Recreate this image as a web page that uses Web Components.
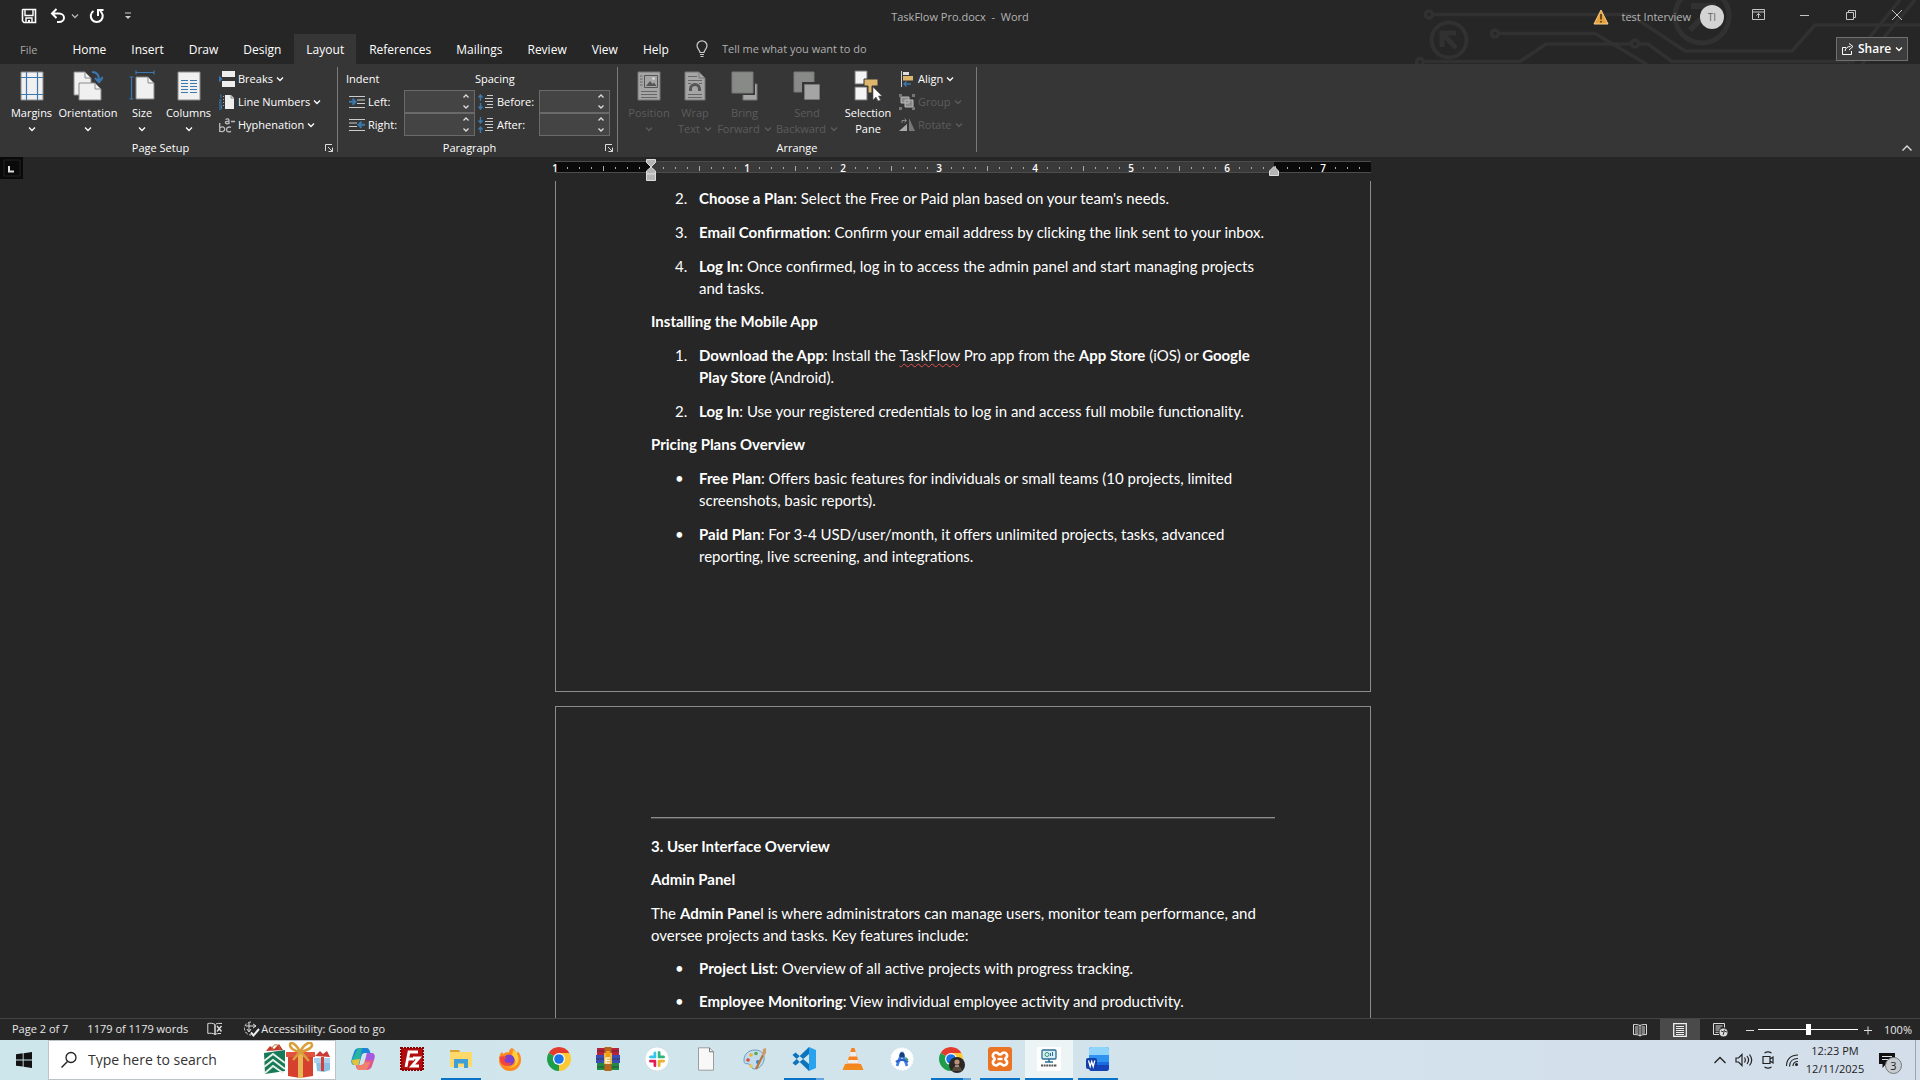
<!DOCTYPE html>
<html lang="en">
<head>
<meta charset="utf-8">
<title>TaskFlow Pro.docx - Word</title>
<style>
  html, body { margin: 0; height: 100%; }
  body { background: #262626; color: #fff; font: 11px/16px "Open Sans", "Noto Sans", sans-serif; overflow: hidden; }
  doc-page { font: 15px/22px Lato, "Open Sans", sans-serif; }
  doc-page p, doc-page h2, doc-page h3, doc-page li { margin: 12px 0 0; font-size: 15px; }
  doc-page h2, doc-page h3, doc-page li.tight { margin-top: 11px; font-weight: 700; }
  doc-page li.tight { font-weight: 400; }
  doc-page ol, doc-page ul { list-style: none; margin: 0; padding: 0 0 0 48px; }
  doc-page ol { counter-reset: step var(--from, 0); }
  doc-page li::before { display: inline-block; width: 24px; margin-left: -24px; }
  doc-page ol li::before { counter-increment: step; content: counter(step) "."; }
  doc-page ul li::before { content: "•"; }
  doc-page hr { border: 0; border-top: 1px solid #8c8c8c; border-bottom: 1px solid #4a4a4a; margin: 14px 0 16px; }
  doc-page .misspelt { text-decoration: underline wavy #e05252 1px; text-underline-offset: 2px; text-decoration-skip-ink: none; }
</style>
</head>
<body>
<word-app>
  <doc-page class="first">
    <ol style="--from: 1">
      <li><b>Choose a Plan</b>: Select the Free or Paid plan based on your team's needs.</li>
      <li><b>Email Confirmation</b>: Confirm your email address by clicking the link sent to your inbox.</li>
      <li><b>Log In:</b> Once confirmed, log in to access the admin panel and start managing projects and tasks.</li>
    </ol>
    <h3>Installing the Mobile App</h3>
    <ol>
      <li><b>Download the App</b>: Install the <span class="misspelt">TaskFlow</span> Pro app from the <b>App Store</b> (iOS) or <b>Google Play Store</b> (Android).</li>
      <li><b>Log In</b>: Use your registered credentials to log in and access full mobile functionality.</li>
    </ol>
    <h3>Pricing Plans Overview</h3>
    <ul>
      <li><b>Free Plan</b>: Offers basic features for individuals or small teams (10 projects, limited screenshots, basic reports).</li>
      <li><b>Paid Plan</b>: For 3-4 USD/user/month, it offers unlimited projects, tasks, advanced reporting, live screening, and integrations.</li>
    </ul>
  </doc-page>
  <doc-page>
    <hr>
    <h2>3. User Interface Overview</h2>
    <h3>Admin Panel</h3>
    <p>The <b>Admin Pane</b>l is where administrators can manage users, monitor team performance, and oversee projects and tasks. Key features include:</p>
    <ul>
      <li class="tight"><b>Project List</b>: Overview of all active projects with progress tracking.</li>
      <li class="tight"><b>Employee Monitoring</b>: View individual employee activity and productivity.</li>
    </ul>
  </doc-page>
</word-app>

<script>
const svg = (w, h, body) => `<svg width="${w}" height="${h}" viewBox="0 0 ${w} ${h}" fill="none">${body}</svg>`;
const sheet = (x, y, w, h, c = '#f0f0f0', s = '#8a8a8a') =>
  `<path d="M${x} ${y}h${w - 6}l6 6v${h - 6}h-${w}z" fill="${c}" stroke="${s}"/><path d="M${x + w - 6} ${y}v6h6" stroke="${s}"/>`;
const chromeRing = (x, y, r) => {
  const p = a => { const t = a * Math.PI / 180; return `${(x + r * Math.cos(t)).toFixed(2)} ${(y + r * Math.sin(t)).toFixed(2)}`; };
  return `<path d="M${x} ${y}L${p(210)}A${r} ${r} 0 0 1 ${p(330)}z" fill="#e33b2e"/>
    <path d="M${x} ${y}L${p(330)}A${r} ${r} 0 0 1 ${p(90)}z" fill="#fcc934"/>
    <path d="M${x} ${y}L${p(90)}A${r} ${r} 0 0 1 ${p(210)}z" fill="#1e9e4a"/>
    <path d="M${x} ${y - r / 2}H${x + r * .87}L${x + r * .4} ${y + r * .3}z" fill="#fcc934"/>
    <circle cx="${x}" cy="${y}" r="${r * .5}" fill="#fff"/><circle cx="${x}" cy="${y}" r="${r * .4}" fill="#1a73e8"/>`;
};
const ICONS = {
  save: svg(16, 16, '<path d="M2 1.5h12.5v13H3l-1.5-1.5V2z" stroke="#fff" stroke-width="1.6"/><path d="M4 2v5.5h8V2M5 14v-4h6v4" stroke="#fff" stroke-width="1.4"/><path d="M7 12h2v3H7z" fill="#fff"/>'),
  undo: svg(16, 16, '<path d="M6.5 1L2 5.5 6.5 10M2.5 5.500H9a5 4.300 0 0 1 0 8.600H7" stroke="#fff" stroke-width="2"/>'),
  redo: svg(16, 16, '<path d="M4.500 3A6 6 0 1 0 11 3" stroke="#fff" stroke-width="2"/><path d="M9 8V2h5.500" stroke="#fff" stroke-width="2"/>'),
  more: svg(8, 8, '<path d="M1 1h6" stroke="#ccc"/><path d="M1 4h6L4 7z" fill="#ccc"/>'),
  chev: svg(8, 8, '<path d="M1 2.500L4 5.500 7 2.500" stroke="currentColor" stroke-width="1.300"/>'),
  up: svg(8, 8, '<path d="M1.500 5.500L4 3l2.500 2.500" stroke="#ddd" stroke-width="1.300"/>'),
  down: svg(8, 8, '<path d="M1.500 2.500L4 5l2.500-2.500" stroke="#ddd" stroke-width="1.300"/>'),
  collapse: svg(12, 12, '<path d="M1.500 8.500L6 4l4.500 4.500" stroke="#ddd" stroke-width="1.400"/>'),
  bulb: svg(14, 18, '<path d="M5 12.500C5 10 2 9 2 5.800a5 5 0 0 1 10 0C12 9 9 10 9 12.500zM5 14.500h4M5.500 16.500h3" stroke="#ccc" stroke-width="1.200"/>'),
  warn: svg(16, 16, '<path d="M8 1l7 14H1z" fill="#e9a23b" stroke="#f4cf8d"/><path d="M8 5v5.500M8 12v1.500" stroke="#3a2a10" stroke-width="1.500"/>'),
  display: svg(14, 12, '<path d="M.5.500h12v10H.5zM.5 3h12M6.500 9V4.500M4.500 6.500l2-2 2 2" stroke="#c4c4c4"/>'),
  min: svg(12, 12, '<path d="M1 6.500h9" stroke="#c4c4c4"/>'),
  restore: svg(12, 12, '<path d="M1.500 3.500h7v7h-7zM3.500 3.500v-2h7v7h-2" stroke="#c4c4c4"/>'),
  close: svg(12, 12, '<path d="M1 1l10 10M11 1L1 11" stroke="#c4c4c4"/>'),
  share: svg(14, 14, '<path d="M5 5.500H1.500v7h9V9" stroke="#fff"/><path d="M4 9c.5-3 2.500-4.500 5.500-4.500M8 1.500l4 3-4 3.500" stroke="#fff"/>'),
  launch: svg(10, 10, '<path d="M1.500 8V1.500H8M4 4l4.500 4.500M8.500 4.500v4h-4" stroke="#ddd"/>'),
  margins: svg(24, 30, '<path d="M1 1h22v28H1z" fill="#f0f0f0" stroke="#8a8a8a"/><path d="M6.500 1v28M17.500 1v28M1 6.500h22M1 23.500h22" stroke="#3b78ad" stroke-width="1.200"/>'),
  orientation: svg(30, 32, sheet(1, 2, 17, 23) + sheet(6, 13, 22, 17) + '<path d="M19 2c5 0 7 3 7 8M22 8l4 4 4-5" stroke="#3b78ad" stroke-width="2.200"/>'),
  size: svg(26, 32, sheet(7, 7, 18, 22) + '<path d="M7 2.500h18M7 .5v4M25 .5v4M2.500 7v22M.5 7h4M.5 29h4" stroke="#3b78ad" stroke-width="1.200"/>'),
  columns: svg(24, 30, '<path d="M1 1h22v28H1z" fill="#f0f0f0" stroke="#8a8a8a"/><path d="M4 9.500h7M4 12.500h7M4 15.500h7M4 18.500h7M4 21.500h7M13 9.500h7M13 12.500h7M13 15.500h7M13 18.500h7M13 21.500h7" stroke="#3b78ad" stroke-width="1.200"/>'),
  breaks: svg(16, 16, '<path d="M3 0h13v6H3zM3 10h13v6H3z" fill="#eee"/><path d="M0 4.500L3.500 8 0 11.500z" fill="#3b78ad"/>'),
  lines: svg(16, 16, '<path d="M6 1h6l3 3v11H6z" fill="#eee"/><path d="M12 1v3h3" stroke="#888"/><path d="M1 1h1v3M0 6h2.500L0 9h3M0 11h2.500v4H0M0 13h2" stroke="#3b78ad"/><path d="M4.500 2v12" stroke="#aaa" stroke-dasharray="1 2"/>'),
  hyphen: svg(16, 16, '<path d="M.7 6v9M.7 11c3-2 5-.8 5 1.200S3 15.500.7 14M12 10.500c-2.500-1.200-4.500 0-4.500 2s2 3 4.500 1.800M6.500 2.500c2-1.200 3.500-.5 3.500 1V7M10 4.500C7 4 6 5 6.500 6s2.500 1 3.500 0M12 4.500h4" stroke="#bbb" stroke-width="1.300"/>'),
  indentL: svg(16, 14, '<path d="M0 1.500h16M8 5h8M8 8.500h8M0 12.500h16" stroke="#ccc"/><path d="M0 6.800h5.500M3.500 3.800l3 3-3 3" stroke="#3b78ad" stroke-width="2"/>'),
  indentR: svg(16, 14, '<path d="M0 1.500h16M0 5h8M0 8.500h8M0 12.500h16" stroke="#ccc"/><path d="M16 6.800h-5.500M12.500 3.800l-3 3 3 3" stroke="#3b78ad" stroke-width="2"/>'),
  before: svg(16, 16, '<path d="M2.500 7V1M.5 3.500l2-2.500 2 2.500M2.500 9v6M.5 12.500l2 2.500 2-2.500" stroke="#3b78ad" stroke-width="1.400"/><path d="M9 1.500h6M7 4.500h8M7 7.500h8M9 10.500h6M7 13.500h8" stroke="#ccc"/>'),
  after: svg(16, 16, '<path d="M2.500 0v6M.5 3.500l2 2.500 2-2.500M2.500 16v-6M.5 12.500l2-2.500 2 2.500" stroke="#3b78ad" stroke-width="1.400"/><path d="M9 1.500h6M7 4.500h8M7 7.500h8M9 10.500h6M7 13.500h8" stroke="#ccc"/>'),
  position: svg(24, 30, '<path d="M1 1h22v28H1z" fill="#a4a5a4" stroke="#777"/><path d="M7.500 4.500h13v12h-13z" fill="#a4a5a4" stroke="#555"/><path d="M9 15l4-5 2.500 3 1.500-1.500L19.500 15z" fill="#555"/><circle cx="16.500" cy="7.500" r="1.300" fill="#ddd"/><path d="M3 5h2.500M3 8h2.500M3 11h2.500M3 14h2.500M4 20.500h16M4 23.500h16M4 26.500h16" stroke="#666"/>'),
  wrap: svg(24, 30, sheet(2, 1, 20, 28, '#a4a5a4', '#777') + '<path d="M5 5.500h9M5 9.500h14M5 12.500h3M16 12.500h3M5 26.500h14M5 23.500h14" stroke="#666"/><path d="M7.500 20v-2a4.500 4.500 0 0 1 9 0v2" stroke="#555" stroke-width="3"/>'),
  forward: svg(28, 30, '<path d="M12 13h14v16H12z" fill="#a4a5a4" stroke="#777"/><path d="M0 0h24v24H0z" fill="#363636"/><path d="M1 1h21v21H1z" fill="#888a88" stroke="#777"/>'),
  backward: svg(28, 30, '<path d="M1 1h20v20H1z" fill="#888a88" stroke="#777"/><path d="M9 11h20v20H9z" fill="#363636"/><path d="M11.500 13.500h15v15h-15z" fill="#a4a5a4" stroke="#777"/>'),
  selection: svg(28, 32, '<path d="M1 1h12v13H1zM1 17h12v13H1z" fill="#f4f4f4" stroke="#777"/><path d="M10 9h14v7h-6v7h-4v-7h-4z" fill="#dcb66c" stroke="#363636"/><path d="M19 17v13l3-3 2 4 2.500-1-2-4h3.500z" fill="#fff" stroke="#555" stroke-width=".6"/>'),
  align: svg(16, 16, '<path d="M2.500 0v16" stroke="#ccc"/><path d="M4 1h6v3H4z" fill="#ddd"/><path d="M4 5h10v4.500H4z" fill="#dcb66c"/><path d="M5 13h7M7.500 10.500L5 13l2.500 2.500" stroke="#3b78ad" stroke-width="1.400"/>'),
  group: svg(16, 16, '<path d="M2 3h8v6H2zM6 6h8v7H6z" fill="#8a8a8a" stroke="#bbb"/><path d="M0 0h3v3H0zM13 0h3v3h-3zM0 13h3v3H0zM13 13h3v3h-3z" fill="#777"/>'),
  rotate: svg(16, 16, '<path d="M8 14H0l8-7z" fill="#aaa"/><path d="M10 1v13h6z" fill="#777"/><path d="M3 6V3.500h4M5.500 1.500l2 2-2 2" stroke="#888"/>'),
  proof: svg(16, 14, '<path d="M8 2.500C6 1 3 1 .8 1.500v10C3 11 6 11 8 12.500zM8 2.500v10M8 12.500c1.500-.8 3-1 6-1M9 2c1.500-.7 3-.7 6-.5" stroke="#ddd"/><path d="M10 4l4.500 5.500M14.500 4L10 9.500" stroke="#ddd" stroke-width="1.400"/>'),
  access: svg(18, 16, '<path d="M9 1a6.500 6.500 0 1 0 0 13" stroke="#ddd" stroke-dasharray="3 1.500"/><path d="M4 5h10M11 3l3 2-3 2M7 2v8M5 8l2 3 2-3" stroke="#ddd"/><path d="M9 11.500l2.500 3L17 8" stroke="#eee" stroke-width="2"/>'),
  read: svg(14, 14, '<path d="M7 2.500v11M7 2.500C5 1.500 3 1.500.5 1.500v10c2.500 0 4.500.2 6.500 1 2-.8 4-1 6.500-1v-10C11 1.500 9 1.500 7 2.500z" stroke="#ddd"/><path d="M2 4h3.500M2 6h3.500M2 8h3.500M8.500 4H12M8.500 6H12M8.500 8H12M8.500 10H12M2 10h3.500" stroke="#ddd"/>'),
  print: svg(14, 14, '<path d="M.7.700h12.600v12.600H.7z" stroke="#eee" stroke-width="1.300"/><path d="M3 3.500h8M3 5.500h8M3 7.500h8M3 9.500h8M3 11.500h8" stroke="#eee"/>'),
  web: svg(15, 14, '<path d="M.5 11.500V.5h11v4M2.500 3h7M2.500 5h5M2.500 7h4M.5 11.500H6M2.500 9.300h3" stroke="#ddd"/><circle cx="10.500" cy="9.500" r="4" fill="#ddd"/><path d="M8 8l3 1-1 3M12 6.500l-1 1.500 3 1" stroke="#333"/>'),
  minus: svg(10, 10, '<path d="M1 5.500h8" stroke="#ddd"/>'),
  plus: svg(10, 10, '<path d="M1 5.500h8M5 1.500v8" stroke="#ddd"/>'),
  start: svg(16, 16, '<path d="M0 2.300L6.700 1.300V7.500H0zM7.600 1.200L16 0v7.500H7.600zM0 8.400h6.700v6.200L0 13.700zM7.600 8.400H16V16l-8.400-1.200z" fill="#111"/>'),
  glass: svg(18, 18, '<circle cx="11" cy="6.500" r="5" stroke="#222" stroke-width="1.300"/><path d="M7.500 10.500L1.500 16.500" stroke="#222" stroke-width="1.400"/>'),
  gifts: svg(68, 36, `<path d="M3 9l4-5 4 3 5-5 4 6z" fill="#c9382e"/><path d="M1 11l21-3v21L2 32z" fill="#17795a"/><path d="M1 19l9-7 12 9M1 25l9-7 12 9M2 31l8-7 10 7" stroke="#e8f2e6" stroke-width="1.800"/><path d="M9 8c0-7 8-7 8 0" stroke="#a8712c"/>
    <path d="M25 14h25v20l-13 2-12-2z" fill="#d6402f"/><path d="M23 10h29v5H23z" fill="#e2533e"/><path d="M35 10h5v26h-5z" fill="#e6b657"/><path d="M37 10c-4-9-10-11-10-7 0 3 4 6 10 7 6-1 12-4 12-7-1-5-8-1-12 7zM37 10l-7 8M38 10l8 9" stroke="#d99f3a" stroke-width="2.600"/>
    <path d="M53 20h14v8l-6 2-7-1z" fill="#8dbfe3"/><path d="M51 16h16v5H51z" fill="#a9d2ee"/><path d="M52 14l5-5 3 3 4-3 3 6z" fill="#cb3a34"/><path d="M58 15h3v14h-3z" fill="#d2403a"/>`),
  copilot: svg(24, 24, '<path d="M9 1h6c3 0 3.500 2 4.500 5H14c-2 0-3 1-3.500 3L8 18H4c-4 0-4-3-3-7l2-6c.8-2.500 2.500-4 6-4z" fill="#1b86d8"/><path d="M3 9l4-8h4L8 18H4c-3 0-4-2-3-5z" fill="#27b5a0"/><path d="M1 13l8-1-1.500 6H4c-2 0-3-2-3-5z" fill="#e6c23c"/><path d="M15 23H9c-3 0-3.500-2-4.500-5H10c2 0 3-1 3.500-3L16 6h4c4 0 4 3 3 7l-2 6c-.8 2.500-2.500 4-6 4z" fill="#e0578f"/><path d="M16 6h4c4 0 4 3 3 7h-8.500z" fill="#a45be0"/><path d="M5 18h5c2 0 3-1 3.500-3h6l-4 8H9c-3 0-3.500-2-4-5z" fill="#f0806b"/>'),
  filezilla: svg(24, 24, '<path d="M1 1h22v22H1z" fill="#b30d0d" stroke="#8d0000" stroke-width="2" stroke-dasharray="2 1"/><path d="M6 20l3-15h9M8 12h6M13 11h6l-7 8h7" stroke="#fff" stroke-width="2.800"/>'),
  explorer: svg(24, 24, '<path d="M1 3h9l2 3H1z" fill="#d9a334"/><path d="M1 5h22v15H1z" fill="#ffd969"/><path d="M5 12h14v9h-4v-4.500H9V21H5z" fill="#3f9fd6"/>'),
  firefox: svg(24, 24, '<path d="M14 1c3 2 4 4 4.500 6 1-1 1-2 1-3 3 3 3.500 6 3.500 9a11 11 0 0 1-22 0c0-4 1-6 3-8l1.500 2C7 5 10 5 11 5.500 11 3 12 2 14 1z" fill="#ff8a1f"/><path d="M15 3c6 4 7 10 4 14-2 3-6 4-9 3 8 1 10-8 4-10z" fill="#ffd13a"/><circle cx="11" cy="13" r="5.500" fill="#7c3fd0"/><path d="M1.500 10c2-1 5-1 8 1-2 0-3 1-3 2 0 3 4 4 7 2-2 5-9 5-11 0z" fill="#f4453c"/>'),
  chrome: svg(24, 24, chromeRing(12, 12, 12)),
  winrar: svg(24, 24, '<path d="M1 1h22v7H1z" fill="#b5243d"/><path d="M0 8h24v8H0z" fill="#3c4fb0"/><path d="M1 16h22v7H1z" fill="#238a43"/><path d="M1 4h22M0 12h24M1 20h22" stroke="#222" stroke-opacity=".35" stroke-width="1.500"/><path d="M8.500 0h7v24h-7z" fill="#b5651d"/><path d="M8 6h8v11H8z" fill="#e8b94a"/><path d="M10 4h4v6h-4z" fill="#f39c12"/><path d="M10 11h4M10 13.500h4M10 11v5h4" stroke="#fff" stroke-width="1.200"/>'),
  slack: svg(24, 24, '<circle cx="12" cy="12" r="12" fill="#fff" stroke="#c9d3d8" stroke-width=".6"/><g stroke-width="3" stroke-linecap="round"><path d="M10 6v4" stroke="#36c5f0"/><path d="M5.500 10H10" stroke="#36c5f0"/><path d="M14 10V5.500M14 10h4.500" stroke="#2eb67d"/><path d="M14 14h4.500M14 14v4.500" stroke="#ecb22e"/><path d="M10 14v4.500M10 14H5.500" stroke="#e01e5a"/></g><path d="M12 4v16M4 12h16" stroke="#fff"/>'),
  file: svg(24, 24, '<path d="M4.500.800h11l4 4v18.400h-15z" fill="#f8f8f8" stroke="#9c9c9c"/><path d="M15.500.800v4h4" stroke="#777"/>'),
  paint: svg(24, 24, '<path d="M12 3c6 0 10 4 9 10-1 5-5 9-10 9-3 0-2-4-5-5S1 18 1 13C1 7 6 3 12 3z" fill="#c2dced" stroke="#6d9dbd"/><circle cx="5" cy="13" r="1.800" fill="#d9483b"/><circle cx="8" cy="8" r="1.800" fill="#efb034"/><circle cx="13" cy="6.500" r="1.800" fill="#58a846"/><circle cx="15" cy="15" r="2" fill="#3b82c4"/><circle cx="8" cy="19" r="1.700" fill="#efc847"/><path d="M13 22l7-14" stroke="#b9773b" stroke-width="2.200"/><path d="M19 8l1-6 3-1v5l-2 3z" fill="#d09a68"/>'),
  vscode: svg(24, 24, '<path d="M17 0l7 3v18l-7 3z" fill="#2aa3ee"/><path d="M17 0v7L3.500 18.500.5 16zM17 24v-7L3.500 5.500.5 8z" fill="#0b74bd"/>'),
  vlc: svg(24, 24, '<path d="M4 17h16l2.500 6h-21z" fill="#f28b1b"/><path d="M10.500 1h3l5 17c-3 2-10 2-13 0z" fill="#f5831f"/><path d="M9.300 5h5.400l1.200 4.500H8zM7 13h10l1.100 3.500H6z" fill="#eee"/>'),
  studio: svg(24, 24, '<circle cx="12" cy="12" r="10.800" fill="#fff" stroke="#fff" stroke-width="1.500" stroke-dasharray="2 1"/><path d="M12 5L7 19M12 5l5 14" stroke="#3f7fe8" stroke-width="2.600"/><path d="M6 15c4-3 8-3 12 0" stroke="#2d62c9" stroke-width="2.500"/><circle cx="12" cy="8" r="2.600" fill="#173f7a"/><path d="M15.500 9.500l3 3-2 2z" fill="#35a853"/>'),
  chrome2: svg(28, 28, chromeRing(14, 14, 12) + '<circle cx="20" cy="20" r="8" fill="#2a2724"/><circle cx="20" cy="17" r="2.600" fill="#b9917a"/><path d="M15 26c1-7 9-7 10 0z" fill="#55483c"/><path d="M18 21h4" stroke="#c9a68f" stroke-width="1.500"/>'),
  xampp: svg(24, 24, '<rect width="24" height="24" rx="3" fill="#ea7423"/><path d="M8 5.500c2 0 2 2 4 2s2-2 4-2a3 3 0 0 1 2 5.300c-1 1-1 1.400 0 2.400a3 3 0 0 1-2 5.300c-2 0-2-2-4-2s-2 2-4 2a3 3 0 0 1-2-5.300c1-1 1-1.400 0-2.400A3 3 0 0 1 8 5.500z" stroke="#fff" stroke-width="2.600"/><path d="M9.500 12h5" stroke="#fff" stroke-width="2.400"/>'),
  taskpro: svg(24, 24, '<path d="M0 0h24v24H0z" fill="#fff"/><rect x="5" y="3" width="14" height="9" rx="1" fill="#d9eef6" stroke="#2d6f95" stroke-width="1.300"/><circle cx="10" cy="7.500" r="2" stroke="#2a9a66"/><path d="M13.500 9V6M15.500 9V5" stroke="#2d6f95"/><path d="M12 12v2.500M8 15h8" stroke="#2d6f95" stroke-width="1.500"/><path d="M4 18.500h16" stroke="#555" stroke-width="2" stroke-dasharray="2 .6"/>'),
  word: svg(24, 24, '<rect x="3" width="20" height="24" rx="3" fill="#1a6be0"/><path d="M6 0h14a3 3 0 0 1 3 3v5H3V3a3 3 0 0 1 3-3z" fill="#8fd4fb"/><path d="M3 8h20v7H3z" fill="#2f93f2"/><path d="M3 18h20v3a3 3 0 0 1-3 3H6a3 3 0 0 1-3-3z" fill="#1443b8"/><rect x="0" y="11" width="11" height="11" rx="2" fill="#123fa9"/><path d="M2.500 13.500l1.700 6 1.500-5 1.500 5 1.600-6" stroke="#fff" stroke-width="1.300"/>'),
  trayup: svg(14, 10, '<path d="M1.500 8L7 2.500 12.500 8" stroke="#222" stroke-width="1.400"/>'),
  sound: svg(18, 14, '<path d="M1 5h2.500L7 1.500v11L3.500 9H1zM9.500 4.500c1 1.500 1 3.500 0 5M12 3c2 2.500 2 5.500 0 8M14.500 1.500c2.800 3.500 2.800 7.500 0 11" stroke="#222" stroke-width="1.200"/>'),
  meet: svg(12, 18, '<path d="M1 5.500h7v7H1zM8 8l3-2v6l-3-2M2.500 2c2-1.300 5-1.300 7 0M2.500 16c2 1.300 5 1.300 7 0" stroke="#222" stroke-width="1.200"/>'),
  wifi: svg(14, 14, '<circle cx="11.500" cy="11.500" r="1.500" fill="#222"/><path d="M8 13c0-3 2-4.500 5-4.500M4.500 13.500c0-5 3.500-8 8.500-8M1.500 13C1.500 6 6 2 13 2" stroke="#222" stroke-width="1.200"/>'),
  note: svg(18, 18, '<path d="M1 2h16v11H8l-3.500 4v-4H1z" fill="#111"/><path d="M4 5.500h10M4 8.500h10" stroke="#dde6ee" stroke-width="1.200"/>'),
  gripTop: svg(10, 22, '<path d="M.5.500h9v3L5 8 .5 3.500z" fill="#b5b5b5" stroke="#ddd"/><path d="M5 8l4.500 4v3h-9v-3z" fill="#b5b5b5" stroke="#ddd"/><path d="M.5 15h9v6.500h-9z" fill="#b5b5b5" stroke="#ddd"/>'),
  gripEnd: svg(10, 10, '<path d="M5 .500L9.500 5v4.500h-9V5z" fill="#b5b5b5" stroke="#ddd"/>'),
  tabstop: svg(18, 18, '<path d="M1 1h16v16H1z" stroke="#222"/><path d="M6 7v5.500h5" stroke="#ddd" stroke-width="2"/>'),
  circuit: svg(505, 64, `<g stroke="#313131" stroke-width="3.500"><circle cx="14" cy="14.500" r="3.500"/><path d="M18 14.500H215L270 51H377l23-26H505"/><circle cx="80" cy="33.500" r="3.500"/><path d="M84 33.500h96l52 31M8 61.500h97L131 44h86M225 44h8l24 17.500H440"/><circle cx="220" cy="43.500" r="3.500"/><circle cx="5" cy="62" r="3.500"/><path d="M433 64L485 0M447 64L500 0"/></g>
    <g stroke="#313131"><circle cx="34" cy="40" r="17.500" stroke-width="4"/><path d="M41 33H27v14M28 34l13 14" stroke-width="5"/><circle cx="287" cy="16" r="27" stroke-width="5"/><path d="M276 6h22v16M297 8l-22 22" stroke-width="6"/></g>`),
};

const BASE = `*{box-sizing:border-box} svg{display:block;flex:none}
button{font:inherit;color:inherit;background:none;border:0;padding:0;margin:0;text-align:inherit}
input{font:inherit;color:inherit;border:0;margin:0;padding:0;min-width:0;outline:0}`;

function define(name, css, html) {
  customElements.define(name, class extends HTMLElement {
    connectedCallback() {
      if (this.shadowRoot) return;
      const t = document.createElement('template');
      t.innerHTML = `<style>${BASE}${css}</style>${typeof html === 'function' ? html(this) : html}`;
      this.attachShadow({ mode: 'open' }).append(t.content.cloneNode(true));
    }
  });
}
const icon = n => `<ui-icon name="${n}"></ui-icon>`;

define('ui-icon', ':host{display:block;flex:none}', el => ICONS[el.getAttribute('name')]);

define('title-bar', `
  :host{display:grid;grid-template-columns:1fr auto 1fr;height:34px;color:#b4b4b4}
  .side{display:flex;align-items:flex-start}
  .quick{height:32px;padding:0 0 0 21px;align-items:center}
  .quick button{margin-right:13px}.quick .tight{margin-right:5px}.quick .arrow{margin-right:10px}.quick .wide{margin-right:19px}
  h1{margin:0;font:inherit;line-height:34px;white-space:pre}
  .right{justify-content:flex-end}
  .user{display:flex;align-items:center;gap:12px;height:34px;margin-right:12px}
  .avatar{width:24px;height:24px;border-radius:50%;background:#d4d4d4;color:#666;font-size:10px;line-height:24px;text-align:center}
  .user .avatar{margin-left:-3px}
  .win{width:46px;height:30px;display:grid;place-items:center}`,
  `<div class="side quick">
    <button aria-label="Save">${icon('save')}</button>
    <button class="tight" aria-label="Undo">${icon('undo')}</button><button class="arrow" aria-label="Undo list">${icon('chev')}</button>
    <button class="wide" aria-label="Repeat">${icon('redo')}</button><button aria-label="Customize toolbar">${icon('more')}</button></div>
  <h1>TaskFlow Pro.docx  -  Word</h1>
  <div class="side right"><div class="user">${icon('warn')}<span>test Interview</span><span class="avatar">TI</span></div>
    <button class="win" aria-label="Ribbon display">${icon('display')}</button><button class="win" aria-label="Minimize">${icon('min')}</button>
    <button class="win" aria-label="Restore">${icon('restore')}</button><button class="win" aria-label="Close">${icon('close')}</button></div>`);

define('ribbon-tabs', `
  :host{display:flex;height:30px;align-items:stretch}
  nav{display:flex;gap:1px;padding-left:8px;font-size:12px}
  button.tab{padding:0 12px;line-height:31px}
  .tab:first-child{color:#a8a8a8;margin-right:10px;font-size:11px}
  .tab[aria-selected=true]{background:#363636}
  label{display:flex;align-items:center;gap:13px;margin-left:14px;flex:1}
  input{background:none;width:220px}
  input::placeholder{color:#b0b0b0;opacity:1}
  .share{display:flex;align-items:center;gap:3px;height:24px;margin:3px 12px 0 0;padding:0 4px;width:72px;background:#3c3c3c;border:1px solid #707070;font-weight:600;font-size:12px}
  .share ui-icon:last-child{margin-left:auto}`,
  `<nav role="tablist">${['File','Home','Insert','Draw','Design','Layout','References','Mailings','Review','View','Help']
    .map(t => `<button class="tab" role="tab" aria-selected="${t === 'Layout'}">${t}</button>`).join('')}</nav>
  <label>${icon('bulb')}<input type="text" aria-label="Tell me" placeholder="Tell me what you want to do"></label>
  <button class="share">${icon('share')}Share${icon('chev')}</button>`);

define('ribbon-group', `
  :host{display:grid;grid-template-rows:72px 18px;width:var(--w);height:85px;margin-top:3px;border-right:1px solid #7a7a7a}
  .foot{display:grid;grid-template-columns:1fr 16px;text-align:center;line-height:18px}
  .foot.plain{grid-template-columns:1fr}
  .foot button{display:grid;place-items:center}
  .body{display:flex;padding-left:var(--pad)}`,
  el => { const plain = el.hasAttribute('plain');
    return `<div class="body"><slot></slot></div><div class="foot ${plain ? 'plain' : ''}"><span>${el.getAttribute('label')}</span>${plain ? '' : `<button aria-label="More options">${icon('launch')}</button>`}</div>`; });

define('ribbon-button', `
  :host{display:block;width:var(--w)}
  :host([disabled]){color:#5c5c5c}
  button{width:100%;display:flex;flex-direction:column;align-items:center;white-space:nowrap}
  .pic{height:38px;display:grid;place-items:center}
  .line{display:flex;align-items:center;gap:4px;height:16px}`,
  el => { const [a, b] = el.getAttribute('label').split('|'), d = el.hasAttribute('disabled');
    return `<button ${d ? 'disabled' : ''}><span class="pic">${icon(el.getAttribute('icon'))}</span><span class="line">${a}</span><span class="line">${b || ''}${el.hasAttribute('menu') ? icon('chev') : ''}</span></button>`; });

define('ribbon-small', `
  :host{display:block;height:23px}
  :host([disabled]){color:#5c5c5c}
  button{display:flex;align-items:center;gap:3px;height:23px;white-space:nowrap}
  .pic{width:16px}`,
  el => `<button ${el.hasAttribute('disabled') ? 'disabled' : ''}><span class="pic">${icon(el.getAttribute('icon'))}</span>${el.getAttribute('label')}${icon('chev')}</button>`);

define('spin-field', `
  :host{display:grid;grid-template-columns:var(--lead) 71px;height:23px}
  label{display:flex;align-items:center;gap:3px}
  .box{display:flex;height:23px;background:#444;border:1px solid #6a6a6a}
  input{flex:1;width:20px;background:none}
  .spin{width:17px;display:grid;grid-template-rows:1fr 1fr}
  .spin button{display:grid;place-items:center;overflow:hidden}`,
  el => `<label for="v">${icon(el.getAttribute('icon'))}${el.getAttribute('label')}</label><span class="box"><input id="v" type="text"><span class="spin"><button aria-label="Increase">${icon('up')}</button><button aria-label="Decrease">${icon('down')}</button></span></span>`);

define('ribbon-bar', `
  :host{display:flex;height:93px;background:#363636;justify-content:space-between}
  .groups{display:flex}
  .stack{display:flex;flex-direction:column}
  .stack b{font-weight:400;line-height:23px}
  .stack spin-field{padding-left:3px}
  .collapse{align-self:flex-end;margin:0 7px 3px 0}`,
  `<div class="groups">
    <ribbon-group label="Page Setup" style="--w:338px;--pad:8px">
      <ribbon-button icon="margins" label="Margins" menu style="--w:47px"></ribbon-button>
      <ribbon-button icon="orientation" label="Orientation" menu style="--w:66px"></ribbon-button>
      <ribbon-button icon="size" label="Size" menu style="--w:42px"></ribbon-button>
      <ribbon-button icon="columns" label="Columns" menu style="--w:51px"></ribbon-button>
      <div class="stack" style="padding-left:5px"><ribbon-small icon="breaks" label="Breaks"></ribbon-small><ribbon-small icon="lines" label="Line Numbers"></ribbon-small><ribbon-small icon="hyphen" label="Hyphenation"></ribbon-small></div>
    </ribbon-group>
    <ribbon-group label="Paragraph" style="--w:280px;--pad:8px">
      <div class="stack" style="--lead:55px"><b>Indent</b><spin-field icon="indentL" label="Left:"></spin-field><spin-field icon="indentR" label="Right:"></spin-field></div>
      <div class="stack" style="--lead:61px"><b>Spacing</b><spin-field icon="before" label="Before:"></spin-field><spin-field icon="after" label="After:"></spin-field></div>
    </ribbon-group>
    <ribbon-group label="Arrange" plain style="--w:359px;--pad:7px">
      <ribbon-button disabled icon="position" label="Position" menu style="--w:48px"></ribbon-button>
      <ribbon-button disabled icon="wrap" label="Wrap|Text" menu style="--w:44px"></ribbon-button>
      <ribbon-button disabled icon="forward" label="Bring|Forward" menu style="--w:55px"></ribbon-button>
      <ribbon-button disabled icon="backward" label="Send|Backward" menu style="--w:70px"></ribbon-button>
      <ribbon-button icon="selection" label="Selection|Pane" style="--w:52px"></ribbon-button>
      <div class="stack" style="padding-left:5px"><ribbon-small icon="align" label="Align"></ribbon-small><ribbon-small disabled icon="group" label="Group"></ribbon-small><ribbon-small disabled icon="rotate" label="Rotate"></ribbon-small></div>
    </ribbon-group></div>
  <button class="collapse" aria-label="Collapse the ribbon">${icon('collapse')}</button>`);

define('page-ruler', `
  :host{display:grid;grid-template-columns:23px 1fr 17px;height:24px}
  .tab{background:#0a0a0a;width:23px;height:22px;display:grid;place-items:center}
  .bar{justify-self:center;position:relative;width:816px;height:12px;margin-top:4px;border:solid #4c4c4c;border-width:1px 0;background:linear-gradient(90deg,#0a0a0a 96px,#3a3a3a 96px 719px,#0a0a0a 719px)}
  .marks{display:flex;margin-left:-6px}
  .marks span{width:12px;flex:none;height:12px;display:grid;place-items:center;font-size:10px;line-height:12px;font-weight:600}
  .marks i{width:1px;height:2px;background:#aaa}.marks i.half{height:5px}
  .grip{position:absolute;top:-3px;left:91px}.grip.end{left:714px;top:4px}`,
  () => `<span class="tab">${icon('tabstop')}</span><div class="bar"><div class="marks">${Array.from({ length: 68 }, (_, i) =>
    i === 8 ? '<span></span>' : i % 8 === 0 ? `<span>${Math.abs(i / 8 - 1)}</span>` : `<span><i class="${i % 4 === 0 ? 'half' : ''}"></i></span>`).join('')}</div>
    <span class="grip">${icon('gripTop')}</span><span class="grip end">${icon('gripEnd')}</span></div>`);

define('doc-page', `
  :host{display:block;box-sizing:border-box;width:816px;flex:none;border:1px solid #8c8c8c;padding:96px 95px}
  :host(.first){border-top:0;padding:0 95px 124px;margin-bottom:14px}
  .in{display:flow-root}
  :host(.first) .in{margin-top:-6px}`,
  '<div class="in"><slot></slot></div>');

define('status-bar', `
  :host{display:flex;justify-content:space-between;height:22px;border-top:1px solid #444;color:#e8e8e8;line-height:20px}
  div{display:flex;align-items:center}
  .left{padding-left:12px;gap:19px;height:20px}
  .left button{display:flex;align-items:center;gap:1px}
  .view{width:40px;height:21px;display:grid;place-items:center}
  .on{background:#4a4a4a}
  .views{margin-right:5px}
  input{-webkit-appearance:none;appearance:none;width:100px;height:12px;margin:0 5px 0 3px;background:linear-gradient(#fff,#fff) center/100% 1px no-repeat}
  input::-webkit-slider-thumb{-webkit-appearance:none;width:5px;height:11px;background:#fff}
  .pct{width:47px;text-align:right;padding-right:8px}`,
  `<div class="left"><span>Page 2 of 7</span><span>1179 of 1179 words</span><button aria-label="Proofing">${icon('proof')}</button><button>${icon('access')}Accessibility: Good to go</button></div>
  <div><div class="views"><button class="view" aria-label="Read mode">${icon('read')}</button><button class="view on" aria-label="Print layout">${icon('print')}</button><button class="view" aria-label="Web layout">${icon('web')}</button></div>
  <button aria-label="Zoom out">${icon('minus')}</button><input type="range" min="0" max="100" value="50" aria-label="Zoom"><button aria-label="Zoom in">${icon('plus')}</button><span class="pct">100%</span></div>`);

define('task-button', `
  :host{display:block;width:48px;height:40px}
  :host([active]){background:#edf4f6}
  button{width:100%;height:40px;display:grid;grid-template-rows:38px 2px;justify-items:center;align-items:center}
  .bar{width:40px;height:2px}
  :host([open]) .bar{background:#0a73c7}
  :host([many]) .bar{background:linear-gradient(90deg,#0a73c7 32px,#63a6dc 32px)}
  :host([active]) .bar{width:48px}`,
  el => `<button aria-label="${el.getAttribute('icon')}">${icon(el.getAttribute('icon'))}<span class="bar"></span></button>`);

define('task-bar', `
  :host{display:flex;height:40px;background:linear-gradient(90deg,#cde6ec,#d2e4ec 50%,#d3deea);color:#1c1c1c}
  .start{width:48px;display:grid;place-items:center}
  .search{width:288px;height:40px;background:#fff;border:1px solid #bcc4c8;display:flex;align-items:center;padding:0 4px 0 11px;gap:10px}
  .search input{flex:1;font-size:14px;background:none}
  .search input::placeholder{color:#333;opacity:1}
  .apps{display:flex;gap:1px;padding-left:3px;flex:1}
  .tray{display:flex;align-items:center}
  .tray button{display:grid;place-items:center;width:24px}
  .clock{width:62px;text-align:center;line-height:18px;margin-right:12px}
  .tray .note{position:relative;width:18px;margin-right:19px}
  .badge{position:absolute;left:7px;top:6px;width:17px;height:17px;border-radius:50%;background:#c6ccd2;border:1px solid #777;line-height:15px;text-align:center}
  .edge{width:5px;height:40px;border-left:1px solid #9aa5b0}`,
  `<button class="start" aria-label="Start">${icon('start')}</button>
  <label class="search">${icon('glass')}<input type="search" aria-label="Search" placeholder="Type here to search">${icon('gifts')}</label>
  <div class="apps">${['copilot','filezilla','explorer open','firefox','chrome','winrar','slack','file','paint','vscode open many','vlc','studio','chrome2 open many','xampp open','taskpro open active','word open']
    .map(s => { const [n, ...f] = s.split(' '); return `<task-button icon="${n}" ${f.join(' ')}></task-button>`; }).join('')}</div>
  <div class="tray"><button aria-label="Hidden icons">${icon('trayup')}</button><button aria-label="Volume">${icon('sound')}</button><button aria-label="Camera">${icon('meet')}</button><button aria-label="Network">${icon('wifi')}</button>
  <span class="clock">12:23 PM<br>12/11/2025</span><button class="note" aria-label="Notifications">${icon('note')}<span class="badge">3</span></button><span class="edge"></span></div>`);

define('word-app', `
  :host{display:flex;flex-direction:column;height:100vh}
  header{position:relative}
  .art{position:absolute;right:0;top:0}
  title-bar,ribbon-tabs{position:relative}
  main{flex:1;min-height:0;overflow:hidden;display:flex;flex-direction:column;align-items:center;padding:0 17px 0 23px}`,
  `<header><span class="art">${icon('circuit')}</span><title-bar></title-bar><ribbon-tabs></ribbon-tabs></header>
  <ribbon-bar></ribbon-bar><page-ruler></page-ruler><main><slot></slot></main><status-bar></status-bar><task-bar></task-bar>`);
</script>
</body>
</html>
